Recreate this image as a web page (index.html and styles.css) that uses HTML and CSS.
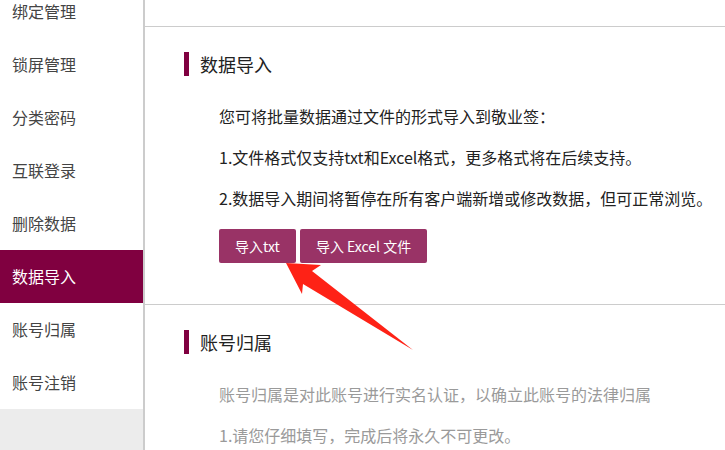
FILE: index.html
```html
<!DOCTYPE html>
<html lang="zh-CN">
<head>
<meta charset="utf-8">
<title>数据导入</title>
<link rel="stylesheet" href="styles.css">
</head>
<body>
<div class="page">
  <aside class="sidebar">
    <ul class="menu">
      <li class="item">绑定管理</li>
      <li class="item">锁屏管理</li>
      <li class="item">分类密码</li>
      <li class="item">互联登录</li>
      <li class="item">删除数据</li>
      <li class="item active">数据导入</li>
      <li class="item">账号归属</li>
      <li class="item">账号注销</li>
    </ul>
  </aside>
  <main class="content">
    <div class="topbar"></div>
    <section class="section">
      <h2 class="title">数据导入</h2>
      <div class="body">
        <p class="line">您可将批量数据通过文件的形式导入到敬业签：</p>
        <p class="line">1.文件格式仅支持txt和Excel格式，更多格式将在后续支持。</p>
        <p class="line">2.数据导入期间将暂停在所有客户端新增或修改数据，但可正常浏览。</p>
        <div class="actions">
          <button class="btn">导入txt</button>
          <button class="btn">导入 Excel 文件</button>
        </div>
      </div>
    </section>
    <section class="section">
      <h2 class="title">账号归属</h2>
      <div class="body muted">
        <p class="line">账号归属是对此账号进行实名认证，以确立此账号的法律归属</p>
        <p class="line">1.请您仔细填写，完成后将永久不可更改。</p>
      </div>
    </section>
  </main>
</div>
<svg class="arrow" width="725" height="450" viewBox="0 0 725 450" xmlns="http://www.w3.org/2000/svg">
  <polygon points="286,263 321,265 312,271 413,350 303,284 302,294" fill="#fe2216"/>
</svg>
</body>
</html>
```
FILE: styles.css
```css
* { box-sizing: border-box; }
html, body {
  margin: 0;
  padding: 0;
  width: 725px;
  height: 450px;
  overflow: hidden;
  background: #fff;
  font-family: "Noto Sans CJK SC", "Noto Sans", sans-serif;
}
.page {
  display: flex;
  height: 450px;
}
.sidebar {
  width: 145px;
  flex: none;
  background: #ececec;
  border-right: 2px solid #cccccc;
  overflow: hidden;
}
.menu {
  list-style: none;
  margin: -15px 0 0 0;
  padding: 0;
}
.item {
  height: 53px;
  line-height: 53px;
  padding-left: 12px;
  font-size: 16px;
  color: #444;
  background: #fff;
}
.item.active {
  background: #800040;
  color: #fff;
}
.content {
  flex: 1;
  display: flex;
  flex-direction: column;
}
.topbar {
  height: 27px;
  border-bottom: 1px solid #cccccc;
  flex: none;
}
.section {
  padding: 25px 0 0 39px;
  border-bottom: 1px solid #cccccc;
  height: 278px;
  flex: none;
}
.section:last-child {
  border-bottom: none;
  height: auto;
}
.title {
  margin: 0 0 20px 0;
  height: 24px;
  line-height: 24px;
  border-left: 5px solid #800040;
  padding-left: 11px;
  font-size: 18px;
  font-weight: normal;
  color: #222;
}
.body {
  padding-left: 35px;
}
.line {
  margin: 0;
  height: 41px;
  line-height: 41px;
  font-size: 16px;
  color: #222;
  white-space: nowrap;
}
.muted .line {
  color: #9a9a9a;
}
.actions {
  display: flex;
  gap: 4px;
  margin-top: 10px;
}
.btn {
  height: 34px;
  padding: 0 16px;
  border: none;
  border-radius: 2px;
  background: #993366;
  color: #fff;
  font-family: "Noto Sans CJK SC", "Noto Sans", sans-serif;
  font-size: 14px;
}
.arrow {
  position: absolute;
  left: 0;
  top: 0;
  pointer-events: none;
}
```
